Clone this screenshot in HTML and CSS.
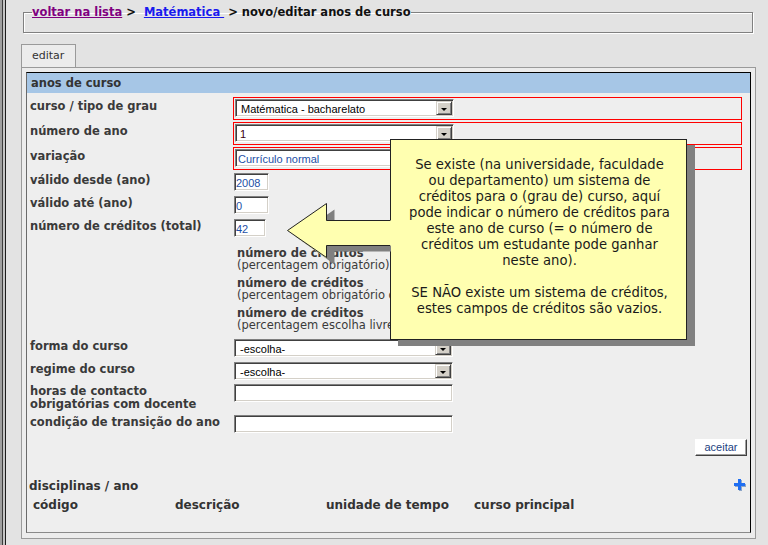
FILE: index.html
```html
<!DOCTYPE html>
<html lang="pt">
<head>
<meta charset="utf-8">
<title>anos de curso</title>
<link rel="stylesheet" href="styles.css">
</head>
<body>
<div class="frame">
  <fieldset class="crumbs">
    <legend><a class="visited" href="#">voltar na lista</a> &gt; &nbsp;<a class="link" href="#">Matématica </a>&nbsp;&gt; novo/editar anos de curso</legend>
    <div class="crumbs-body"></div>
  </fieldset>

  <div class="tabs"><span class="tab">editar</span></div>

  <div class="panel">
    <div class="box">
      <div class="box-head">anos de curso</div>
      <div class="form">
        <div class="row req">
          <div class="lbl">curso / tipo de grau</div>
          <div class="ctl"><div class="sel"><span class="val">Matématica - bacharelato</span><span class="drop"><i class="tri"></i></span></div></div>
        </div>
        <div class="row req">
          <div class="lbl">número de ano</div>
          <div class="ctl"><div class="sel"><span class="val num">1</span><span class="drop"><i class="tri"></i></span></div></div>
        </div>
        <div class="row req">
          <div class="lbl">variação</div>
          <div class="ctl"><input class="inp blue wide" type="text" value="Currículo normal" readonly></div>
        </div>
        <div class="row gap3">
          <div class="lbl">válido desde (ano)</div>
          <div class="ctl"><input class="inp blue w35" type="text" value="2008" readonly></div>
        </div>
        <div class="row">
          <div class="lbl">válido até (ano)</div>
          <div class="ctl"><input class="inp blue w35" type="text" value="0" readonly></div>
        </div>
        <div class="row">
          <div class="lbl">número de créditos (total)</div>
          <div class="ctl"><input class="inp blue w32" type="text" value="42" readonly></div>
        </div>

        <div class="credits">
          <div class="cgroup"><b>número de créditos</b><span>(percentagem obrigatório)</span></div>
          <div class="cgroup"><b>número de créditos</b><span>(percentagem obrigatório de opção)</span></div>
          <div class="cgroup"><b>número de créditos</b><span>(percentagem escolha livre)</span></div>
        </div>

        <div class="row gap8">
          <div class="lbl">forma do curso</div>
          <div class="ctl"><div class="sel"><span class="val">-escolha-</span><span class="drop"><i class="tri"></i></span></div></div>
        </div>
        <div class="row">
          <div class="lbl">regime do curso</div>
          <div class="ctl"><div class="sel"><span class="val">-escolha-</span><span class="drop"><i class="tri"></i></span></div></div>
        </div>
        <div class="row gap4">
          <div class="lbl two">horas de contacto<br>obrigatórias com docente</div>
          <div class="ctl"><input class="inp wide" type="text" value="" readonly></div>
        </div>
        <div class="row">
          <div class="lbl">condição de transição do ano</div>
          <div class="ctl"><input class="inp wide" type="text" value="" readonly></div>
        </div>
      </div>

      <div class="actions"><button class="btn" type="button">aceitar</button></div>

      <div class="sub-head">
        <span>disciplinas / ano</span>
        <svg class="plus" width="12" height="12" viewBox="0 0 12 12" aria-hidden="true">
          <rect x="5" y="1" width="3" height="11" fill="#8da6c8"/>
          <rect x="1" y="5" width="11" height="3" fill="#8da6c8"/>
          <rect x="4" y="0" width="3" height="11" fill="#1f6ef2"/>
          <rect x="0" y="4" width="11" height="3" fill="#1f6ef2"/>
        </svg>
      </div>
      <div class="thead">
        <span>código</span>
        <span>descrição</span>
        <span>unidade de tempo</span>
        <span>curso principal</span>
      </div>
    </div>
  </div>

  <div class="tip">Se existe (na universidade, faculdade<br>ou departamento) um sistema de<br>créditos para o (grau de) curso, aquí<br>pode indicar o número de créditos para<br>este ano de curso (= o número de<br>créditos um estudante pode ganhar<br>neste ano).<br><br>SE NÃO existe um sistema de créditos,<br>estes campos de créditos são vazios.</div>

  <svg class="arrow" width="111" height="72" viewBox="0 0 111 72" aria-hidden="true">
    <polygon points="15.5,40.5 54.5,13.5 54.5,30.5 120,30.5 120,55.5 54.5,55.5 54.5,68.5" fill="#808080"/>
    <polygon points="7.5,34.5 46.5,7.5 46.5,24.5 112,24.5 112,49.5 46.5,49.5 46.5,62.5" fill="#ffffb0"/>
    <polyline points="110,24.5 46.5,24.5 46.5,7.5 7.5,34.5 46.5,61.5 46.5,49.5 110,49.5" fill="none" stroke="#222" stroke-width="1"/>
  </svg>
</div>
</body>
</html>
```

FILE: styles.css
```css
* { box-sizing: border-box; }
html, body { margin: 0; padding: 0; }
body {
  width: 768px;
  height: 545px;
  overflow: hidden;
  background: #e3e3e3;
  font-family: "DejaVu Sans", Verdana, sans-serif;
  color: #333;
}
.frame {
  position: relative;
  height: 545px;
  padding-top: 5px;
  background: linear-gradient(to right,
    #a0a0a0 0, #a0a0a0 2px,
    #3c3c3c 2px, #3c3c3c 3px,
    #c4c4c4 3px, #c4c4c4 5px,
    #1c1c1c 5px, #1c1c1c 6px,
    transparent 6px);
}

/* breadcrumb fieldset */
.crumbs {
  margin: 0 0 0 23px;
  width: 730px;
  min-width: 0;
  padding: 0;
  border: 1px solid #808080;
  box-shadow: 1px 1px 0 #fff, inset 1px 1px 0 #fff;
}
.crumbs legend {
  margin-left: 8px;
  padding: 0;
  font-weight: bold;
  font-size: 11.5px;
  line-height: 14px;
  color: #111;
}
.crumbs a { text-decoration: underline; }
.crumbs .visited { color: #800080; }
.crumbs .link { color: #1a1aee; }
.crumbs-body { height: 13px; }

/* tabs */
.tabs { margin: 11px 0 0 21px; height: 23px; display: flex; }
.tab {
  width: 55px;
  height: 23px;
  border: 1px solid #9a9a9a;
  border-bottom: 0;
  background: #ececec;
  padding: 4px 0 0 10px;
  font-size: 11px;
  line-height: 14px;
  color: #333;
}

/* panel */
.panel {
  margin-left: 21px;
  width: 735px;
  height: 472px;
  border: 1px solid #9a9a9a;
  padding: 4px 4px 5px 4px;
  background: #ececec;
}
.box {
  height: 461px;
  border: 1px solid;
  border-color: #000 #000 #8a8a8a #6a6a6a;
  background: #eeeeee;
}
.box-head {
  height: 20px;
  background: #a6c6e6;
  padding: 1px 0 0 4px;
  font-weight: bold;
  font-size: 11.5px;
  line-height: 19px;
  color: #333;
}

/* form */
.form { padding-top: 4px; }
.row { display: flex; align-items: flex-start; margin-top: 5px; }
.row.req { margin-top: 2px; }
.row.req:first-child { margin-top: 0; }
.row.gap3 { margin-top: 3px; }
.row.gap4 { margin-top: 4px; }
.row.gap8 { margin-top: 8px; }
.lbl {
  width: 206px;
  flex: none;
  padding: 1px 0 0 3px;
  font-weight: bold;
  font-size: 11.5px;
  line-height: 12px;
  color: #3a3a3a;
}
.lbl.two { line-height: 12.5px; }
.req .lbl { padding-top: 3px; }
.ctl { margin-left: 1px; }
.req .ctl {
  margin-left: 0;
  width: 509px;
  border: 1px solid #f00;
  padding: 1px 1px 2px 1px;
}

.sel {
  width: 219px;
  height: 18px;
  display: flex;
  background: #fff;
  border: 1px solid;
  border-color: #808080 #fff #fff #808080;
  box-shadow: inset 1px 1px 0 #404040, inset -1px -1px 0 #d4d0c8;
  padding: 1px;
}
.val {
  flex: 1;
  padding: 1px 0 0 4px;
  font-family: "Liberation Sans", Arial, sans-serif;
  font-size: 11px;
  line-height: 14px;
  color: #000;
  white-space: nowrap;
  overflow: hidden;
}
.val.num { color: #3a0010; padding-left: 3px; }
.drop {
  flex: none;
  width: 16px;
  height: 14px;
  display: flex;
  align-items: center;
  justify-content: center;
  background: #d4d0c8;
  border: 1px solid;
  border-color: #d4d0c8 #404040 #404040 #d4d0c8;
  box-shadow: inset 1px 1px 0 #fff, inset -1px -1px 0 #808080;
  padding-top: 2px;
}
.tri {
  display: block;
  width: 0;
  height: 0;
  border-top: 3px solid #000;
  border-left: 3px solid transparent;
  border-right: 3px solid transparent;
}

.inp {
  display: block;
  height: 18px;
  margin: 0;
  padding: 1px 0 0 1px;
  background: #fff;
  border: 1px solid;
  border-color: #808080 #fff #fff #808080;
  box-shadow: inset 1px 1px 0 #404040, inset -1px -1px 0 #d4d0c8;
  font-family: "Liberation Sans", Arial, sans-serif;
  font-size: 11px;
  line-height: 14px;
  color: #000;
  outline: none;
}
.inp.blue { color: #1d4fa6; }
.inp.w35 { width: 35px; }
.inp.w32 { width: 32px; }
.inp.wide { width: 219px; }
.req .inp.wide { width: 219px; padding-left: 2px; }

.credits { margin: 10px 0 0 210px; }
.cgroup {
  display: flex;
  flex-direction: column;
  margin-bottom: 6px;
  font-size: 11.5px;
  line-height: 12px;
  color: #3a3a3a;
  white-space: nowrap;
}
.cgroup b { font-weight: bold; }

.actions { margin-top: 6px; display: flex; justify-content: flex-end; padding-right: 3px; }
.btn {
  width: 52px;
  height: 17px;
  margin: 0;
  padding: 0 0 1px 0;
  background: #fff;
  border: 1px solid;
  border-color: #fff #404040 #404040 #fff;
  box-shadow: inset -1px -1px 0 #a0a0a0;
  font-family: "Liberation Sans", Arial, sans-serif;
  font-size: 11px;
  line-height: 14px;
  color: #1c3f80;
}

.sub-head {
  margin-top: 23px;
  display: flex;
  justify-content: space-between;
  align-items: center;
  padding: 0 4px 0 2px;
  font-weight: bold;
  font-size: 12px;
  line-height: 14px;
  color: #333;
}
.plus { display: block; margin-top: -2px; }
.thead {
  margin-top: 5px;
  display: grid;
  grid-template-columns: 142px 151px 148px auto;
  padding-left: 6px;
  font-weight: bold;
  font-size: 12px;
  line-height: 14px;
  color: #333;
}

/* tooltip with arrow */
.tip {
  position: absolute;
  left: 390px;
  top: 139px;
  width: 297px;
  height: 201px;
  border: 1px solid #222;
  background: #ffffb0;
  box-shadow: 8px 6px 0 #808080;
  padding: 17px 0 0 2px;
  text-align: center;
  font-size: 13.2px;
  line-height: 16px;
  color: #1a1a1a;
  white-space: nowrap;
}
.arrow {
  position: absolute;
  left: 280px;
  top: 196px;
  display: block;
}
```
